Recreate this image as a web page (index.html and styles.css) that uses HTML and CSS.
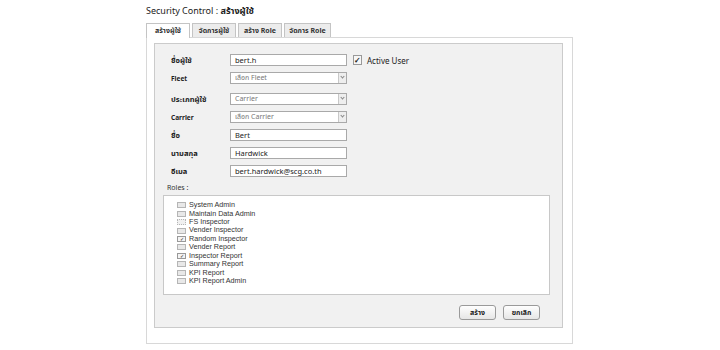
FILE: index.html
```html
<!DOCTYPE html>
<html>
<head>
    <title>Security Control</title>
    <link rel="stylesheet" href="styles.css">
</head>
<body>
    <div class="page">
        <div class="title">Security Control : <span class="th">สร้างผู้ใช้</span></div>
        <div class="tabs">
            <div class="tab active">สร้างผู้ใช้</div>
            <div class="tab">จัดการผู้ใช้</div>
            <div class="tab">สร้าง Role</div>
            <div class="tab wide">จัดการ Role</div>
        </div>
        <div class="frame">
            <div class="panel">
                <div class="row">
                    <label class="th-label">ชื่อผู้ใช้</label>
                    <div class="field">bert.h</div>
                    <span class="check big">&#10003;</span>
                    <span class="active-text">Active User</span>
                </div>
                <div class="row gap-big">
                    <label class="en-label">Fleet</label>
                    <div class="field select muted">เลือก Fleet<span class="arrow"></span></div>
                </div>
                <div class="row">
                    <label class="th-label">ประเภทผู้ใช้</label>
                    <div class="field select muted">Carrier<span class="arrow"></span></div>
                </div>
                <div class="row">
                    <label class="en-label">Carrier</label>
                    <div class="field select muted">เลือก Carrier<span class="arrow"></span></div>
                </div>
                <div class="row">
                    <label class="th-label">ชื่อ</label>
                    <div class="field">Bert</div>
                </div>
                <div class="row">
                    <label class="th-label">นามสกุล</label>
                    <div class="field">Hardwick</div>
                </div>
                <div class="row">
                    <label class="th-label">อีเมล</label>
                    <div class="field">bert.hardwick@scg.co.th</div>
                </div>
                <div class="roles-label">Roles :</div>
                <div class="roles" id="roles"></div>
                <div class="actions">
                    <button class="btn">สร้าง</button>
                    <button class="btn">ยกเลิก</button>
                </div>
            </div>
        </div>
    </div>
    <script>
        const roles = [
            { name: 'System Admin' },
            { name: 'Maintain Data Admin' },
            { name: 'FS Inspector', disabled: true },
            { name: 'Vender Inspector' },
            { name: 'Random Inspector', checked: true },
            { name: 'Vender Report' },
            { name: 'Inspector Report', checked: true },
            { name: 'Summary Report' },
            { name: 'KPI Report' },
            { name: 'KPI Report Admin' }
        ];

        const rolesBox = document.getElementById('roles');
        roles.forEach(role => {
            const item = document.createElement('div');
            item.classList.add('role');
            let cls = 'box';
            if (role.checked) cls += ' on';
            if (role.disabled) cls += ' off';
            item.innerHTML = `<span class="${cls}">${role.checked ? '&#10003;' : ''}</span>${role.name}`;
            rolesBox.appendChild(item);
        });
    </script>
</body>
</html>
```

FILE: styles.css
```css
body {
    margin: 0;
    font-family: "Noto Sans", "Noto Sans Thai", Tahoma, sans-serif;
    font-size: 8px;
    color: #333;
    background-color: #fff;
}
.page {
    width: 427px;
    margin-left: 146px;
    padding-top: 5px;
}
.title {
    font-size: 9px;
    line-height: 12px;
    height: 18px;
    color: #222;
}
.title .th {
    font-weight: bold;
}
.tabs {
    display: flex;
    gap: 2px;
    height: 14px;
}
.tab {
    width: 44px;
    box-sizing: border-box;
    border: 1px solid #c4c4c4;
    border-bottom: none;
    background-color: #ececec;
    font-size: 7px;
    font-weight: bold;
    line-height: 13px;
    text-align: center;
    color: #333;
}
.tab.wide {
    width: 47px;
}
.tab.active {
    background-color: #fff;
    height: 15px;
    position: relative;
    z-index: 1;
}
.frame {
    box-sizing: border-box;
    height: 307px;
    border: 1px solid #d8d8d8;
    background-color: #fff;
    padding: 5px 9px 0 7px;
}
.panel {
    box-sizing: border-box;
    height: 285px;
    border: 1px solid #cbcbcb;
    background-color: #f1f1f1;
    padding: 10px 0 0 16px;
}
.row {
    display: flex;
    align-items: center;
    height: 12px;
    margin-bottom: 6px;
}
.row.gap-big {
    margin-bottom: 9px;
}
.th-label, .en-label {
    width: 59px;
    font-weight: bold;
    color: #222;
}
.th-label {
    font-size: 7.5px;
}
.en-label {
    font-size: 6.5px;
}
.field {
    box-sizing: border-box;
    width: 117px;
    height: 12px;
    border: 1px solid #a9a9a9;
    background-color: #fff;
    padding-left: 4px;
    font-size: 7.5px;
    line-height: 10px;
    color: #222;
    position: relative;
}
.field.muted {
    color: #777;
    font-size: 7px;
}
.arrow {
    position: absolute;
    right: 0;
    top: 0;
    width: 7px;
    height: 10px;
    border-left: 1px solid #c8c8c8;
    background-color: #eee;
}
.arrow::after {
    content: "";
    position: absolute;
    left: 2px;
    top: 2px;
    width: 2px;
    height: 2px;
    border-right: 1px solid #888;
    border-bottom: 1px solid #888;
    transform: rotate(45deg);
}
.check {
    display: inline-block;
    box-sizing: border-box;
    border: 1px solid #999;
    background-color: #f6f6f6;
    text-align: center;
    color: #222;
}
.check.big {
    width: 9px;
    height: 10px;
    margin-left: 6px;
    font-size: 8px;
    line-height: 8px;
    font-weight: bold;
}
.active-text {
    margin-left: 5px;
    font-size: 8px;
    color: #222;
}
.roles-label {
    margin-top: 1px;
    margin-left: -4px;
    font-size: 7px;
    line-height: 10px;
    color: #333;
}
.roles {
    box-sizing: border-box;
    width: 387px;
    height: 100px;
    margin-top: 2px;
    margin-left: -8px;
    border: 1px solid #c8c8c8;
    background-color: #fff;
    padding: 5px 0 0 13px;
}
.role {
    display: flex;
    align-items: center;
    height: 8.44px;
    font-family: "Liberation Sans", Arial, sans-serif;
    font-size: 7.2px;
    line-height: 8.2px;
    color: #333;
}
.box {
    box-sizing: border-box;
    width: 9px;
    height: 6px;
    margin-right: 3px;
    border: 1px solid #b5b5b5;
    background-color: #e8e8e8;
    font-size: 5px;
    line-height: 4px;
    text-align: center;
    color: #222;
}
.box.on {
    background-color: #f4f4f4;
    border-color: #999;
}
.box.off {
    background-color: #f0f0f0;
    border-style: dotted;
}
.actions {
    display: flex;
    justify-content: flex-end;
    gap: 7px;
    margin-top: 10px;
    padding-right: 22px;
}
.btn {
    width: 37px;
    height: 15px;
    padding: 0;
    border: 1px solid #9a9a9a;
    border-radius: 3px;
    background: linear-gradient(#fefefe, #e6e6e6);
    font-family: "Noto Sans", "Noto Sans Thai", Tahoma, sans-serif;
    font-size: 7px;
    font-weight: bold;
    color: #222;
}
```
